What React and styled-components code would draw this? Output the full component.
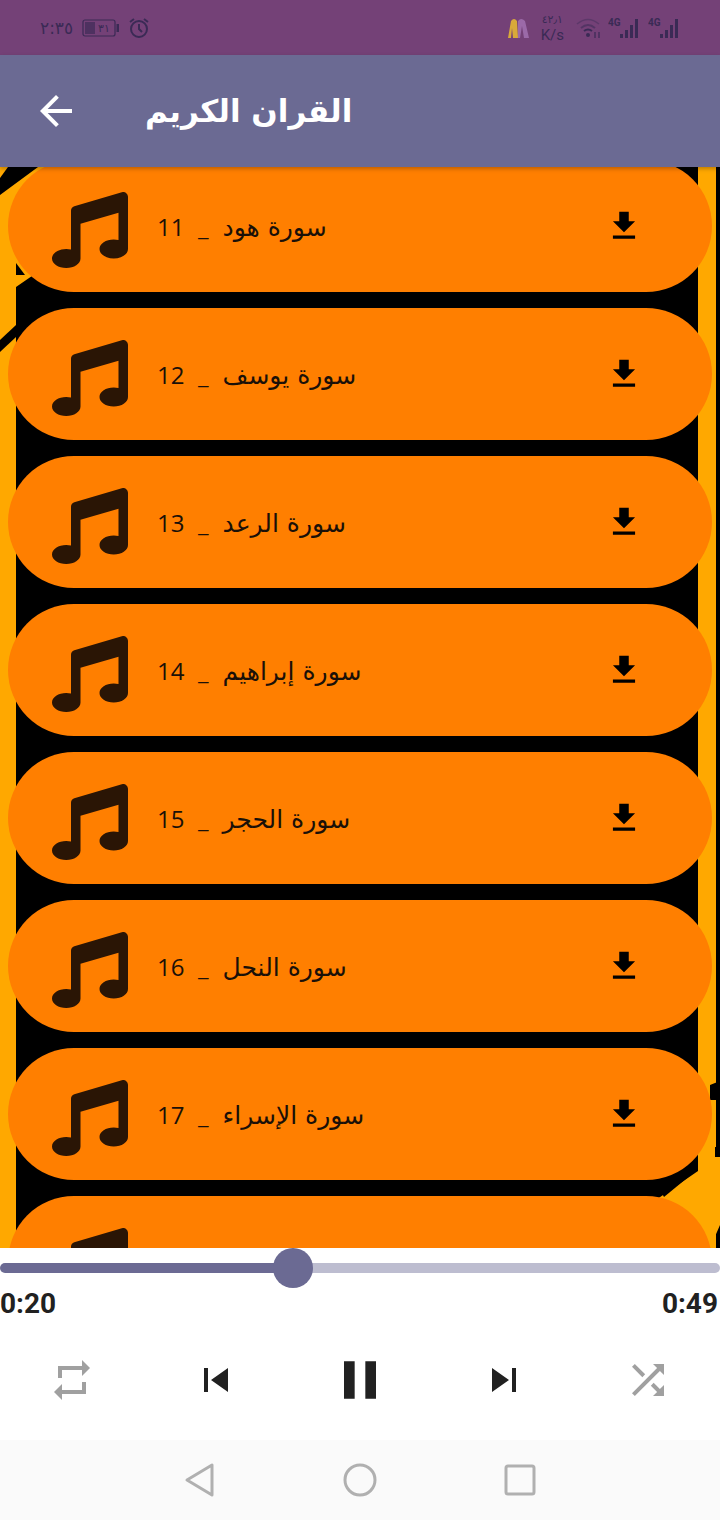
import React from "react";
import styled, { createGlobalStyle } from "styled-components";
import { FaMusic } from "react-icons/fa";
import { MdArrowBack, MdFileDownload, MdRepeat, MdSkipPrevious, MdPause, MdSkipNext, MdShuffle } from "react-icons/md";

const Global = createGlobalStyle`
  html, body { margin: 0; padding: 0; background: #fff; }
  body { font-family: "Noto Sans", "DejaVu Sans", sans-serif; }
`;
const Page = styled.div`width: 720px; height: 1520px; display: flex; flex-direction: column; overflow: hidden;`;
const StatusBar = styled.div`
  height: 55px; background: #744177; display: flex; align-items: center; justify-content: space-between;
  padding: 0 38px 0 40px; color: #3a2a55; flex: none;
`;
const StatusGroup = styled.div`display: flex; align-items: center; gap: ${p => p.$gap || 8}px;`;
const Clock = styled.span`font: 17px "DejaVu Sans", sans-serif; letter-spacing: .3px;`;
const Speed = styled.div`display: flex; flex-direction: column; align-items: center; font: 15px/17px "Roboto", sans-serif; margin: 2px 6px 0 5px;`;
const SpeedValue = styled.span`font-size: 11px; line-height: 14px; font-family: "DejaVu Sans", sans-serif;`;
const AppBar = styled.header`
  height: 112px; background: #6b6a93; display: flex; align-items: center; flex: none; padding-left: 32px; gap: 65px;
  position: relative; z-index: 2; box-shadow: 0 2px 4px rgba(0,0,0,.25); color: #fff;
`;
const Title = styled.h1`margin: 0; font: 700 31px "DejaVu Sans", sans-serif;`;
const ListArea = styled.main`flex: 1; min-height: 0; position: relative; overflow: hidden; background: #000;`;
const Backdrop = styled.svg`position: absolute; left: 0; top: 0; width: 720px; height: 1081px; filter: blur(.7px);`;
const List = styled.div`position: relative; display: flex; flex-direction: column; gap: 16px; margin: -7px 8px 0;`;
const Row = styled.div`
  height: 132px; flex: none; border-radius: 66px; background: #ff7f00; display: flex; align-items: center;
  padding: 0 69px 0 44px; color: #111;
`;
const Note = styled(FaMusic)`color: #2a1505; flex: none; margin-top: 8px;`;
const Label = styled.span`
  margin-left: 29px; flex: 1; font: 24px "Open Sans", "DejaVu Sans", sans-serif; display: flex; align-items: center; gap: 13px; color: #1a1008;
`;
const Num = styled.span`width: 28px;`;
const Name = styled.span`margin-left: 1px; font-family: "DejaVu Sans", sans-serif; font-size: 25px; padding-top: 2px;`;
const Download = styled(MdFileDownload)`color: #000; flex: none;`;
const Player = styled.section`height: 192px; background: #fff; flex: none; display: flex; flex-direction: column;`;
const Slider = styled.div`height: 40px; display: flex; align-items: center; position: relative; flex: none;`;
const TrackDone = styled.div`height: 10px; background: #6b6a93; border-radius: 5px 0 0 5px;`;
const TrackLeft = styled.div`height: 10px; flex: 1; background: #bdbdd0; border-radius: 0 5px 5px 0;`;
const Thumb = styled.div`width: 40px; height: 40px; border-radius: 50%; background: #6b6a93; flex: none; margin: 0 -7px 0 -20px; position: relative;`;
const Times = styled.div`display: flex; justify-content: space-between; font: 700 28px/32px "Roboto", sans-serif; color: #212121; padding: 0 2px 0 0; flex: none;`;
const Controls = styled.div`display: grid; grid-template-columns: repeat(5, 144px); flex: 1; align-items: center;`;
const Control = styled.div`display: flex; align-items: center; justify-content: center; color: ${p => p.$muted ? "#a0a0a0" : "#212121"};`;
const NavBar = styled.nav`height: 80px; flex: none; background: #fafafa; display: grid; grid-template-columns: 40px 40px 40px; justify-content: center; column-gap: 120px; align-items: center; justify-items: center;`;

const rows = [
  ["11", "سورة هود"], ["12", "سورة يوسف"], ["13", "سورة الرعد"], ["14", "سورة إبراهيم"],
  ["15", "سورة الحجر"], ["16", "سورة النحل"], ["17", "سورة الإسراء"], ["18", ""],
];

const StatusIcons = {
  Battery: () => (
    <svg width="37" height="20" viewBox="0 0 37 20">
      <rect x="1" y="2" width="32" height="16" rx="2" fill="none" stroke="currentColor" strokeWidth="1.2" />
      <rect x="3" y="4" width="10" height="12" fill="currentColor" opacity=".65" />
      <text x="22" y="14" fontSize="11" fontFamily="DejaVu Sans" textAnchor="middle" fill="currentColor">٣١</text>
      <rect x="34.5" y="6" width="2.5" height="8" fill="currentColor" />
    </svg>
  ),
  Alarm: () => (
    <svg width="22" height="22" viewBox="0 0 22 22" fill="none" stroke="currentColor" strokeWidth="2">
      <circle cx="11" cy="12" r="8" />
      <path d="M11 7v5l3 3M2 5l4-3M20 5l-4-3" />
    </svg>
  ),
  Logo: () => (
    <svg width="24" height="24" viewBox="0 0 24 24">
      <path d="M2 22 5 5q3-4 6 0l1 17h-5l-1-10-1 10z" fill="#d8a93a" />
      <path d="M12 5q3-4 7 0l4 17h-5l-2-12-2 12h-2z" fill="#9b6aa8" />
    </svg>
  ),
  Wifi: () => (
    <svg width="26" height="24" viewBox="0 0 26 24" fill="none" stroke="currentColor">
      <path d="M1 8q11-9 22 0" strokeWidth="1.5" opacity=".4" />
      <path d="M5 12q7-6 14 0" strokeWidth="2" opacity=".55" />
      <path d="M8 15q4-3 8 0" strokeWidth="2" />
      <circle cx="12" cy="19" r="2" fill="currentColor" stroke="none" />
      <path d="M19 16v6M23 16v6" strokeWidth="1.2" />
    </svg>
  ),
  Signal: () => (
    <svg width="34" height="24" viewBox="0 0 34 24">
      <text x="0" y="10" fontSize="10" fontWeight="700" fontFamily="Roboto" fill="currentColor">4G</text>
      <path d="M12 18h3v4h-3zM17 14h3v8h-3zM22 9h3v13h-3zM27 3h3v19h-3z" fill="currentColor" />
    </svg>
  ),
};

export default function App() {
  return (
    <Page>
      <Global />
      <StatusBar>
        <StatusGroup $gap={9}>
          <Clock>٢:٣٥</Clock>
          <StatusIcons.Battery />
          <StatusIcons.Alarm />
        </StatusGroup>
        <StatusGroup $gap={6}>
          <StatusIcons.Logo />
          <Speed><SpeedValue>٤٢٫١</SpeedValue>K/s</Speed>
          <StatusIcons.Wifi />
          <StatusIcons.Signal />
          <StatusIcons.Signal />
        </StatusGroup>
      </StatusBar>
      <AppBar>
        <MdArrowBack size={48} />
        <Title>القران الكريم</Title>
      </AppBar>
      <ListArea>
        <Backdrop viewBox="0 0 720 1081">
          <path d="M0 28V1081H16V120L45 100 70 0H38Z" fill="#ffa800" />
          <path d="M0 0H8L0 11Z" fill="#ffa800" />
          <path d="M16 96 25 108 16 108Z" fill="#000" />
          <path d="M0 173 16 158V170L0 185Z" fill="#000" />
          <path d="M698 0H716V1081H698Z" fill="#ffa800" />
          <path d="M650 1037 698 1004V960H716V985H720V1058L710 1081H650Z" fill="#ffa800" />
          <path d="M660 1023 695 996 698 1002 664 1030Z" fill="#000" />
          <path d="M710 918 720 914V933H710Z" fill="#000" />
          <path d="M715 980H720V990H715Z" fill="#000" />
        </Backdrop>
        <List>
          {rows.map(([n, name]) => (
            <Row key={n}>
              <Note size={76} />
              {name && (
                <>
                  <Label>
                    <Num>{n}</Num>
                    <span>_</span>
                    <Name dir="rtl">{name}</Name>
                  </Label>
                  <Download size={38} />
                </>
              )}
            </Row>
          ))}
        </List>
      </ListArea>
      <Player>
        <Slider>
          <TrackDone style={{ width: 293 }} />
          <Thumb />
          <TrackLeft />
        </Slider>
        <Times><span>0:20</span><span>0:49</span></Times>
        <Controls>
          <Control $muted><MdRepeat size={48} /></Control>
          <Control><MdSkipPrevious size={48} /></Control>
          <Control><MdPause size={64} /></Control>
          <Control><MdSkipNext size={48} /></Control>
          <Control $muted><MdShuffle size={48} /></Control>
        </Controls>
      </Player>
      <NavBar>
        <svg width="32" height="36" viewBox="0 0 32 36"><path d="M28 3v30L3 18z" fill="none" stroke="#b0b0b0" strokeWidth="3" strokeLinejoin="round" /></svg>
        <svg width="34" height="34" viewBox="0 0 34 34"><circle cx="17" cy="17" r="15" fill="none" stroke="#b0b0b0" strokeWidth="3" /></svg>
        <svg width="32" height="32" viewBox="0 0 32 32"><rect x="2" y="2" width="28" height="28" rx="2" fill="none" stroke="#b0b0b0" strokeWidth="3" /></svg>
      </NavBar>
    </Page>
  );
}
